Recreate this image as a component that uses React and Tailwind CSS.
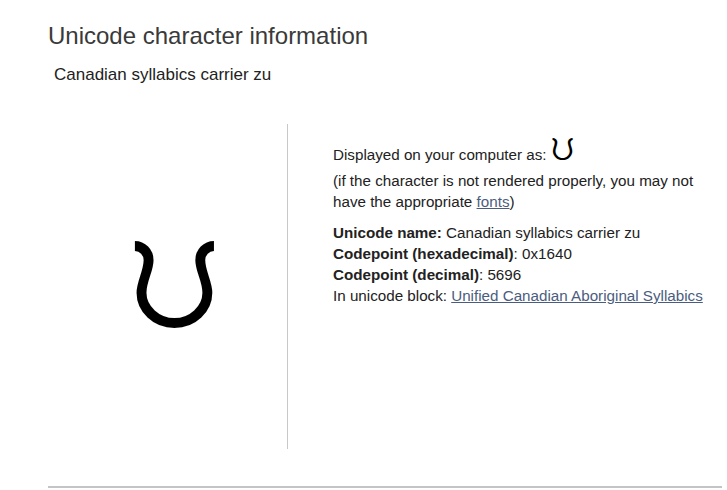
export default function App() {
  return (
    <div className="min-h-[490px] bg-white font-['Liberation_Sans',Arial,sans-serif] text-[#333]">
      <div className="px-[48px] pt-[22px]">
        <h1 className="text-[24px] leading-[28px] text-[#3a3a3a]">Unicode character information</h1>
        <h2 className="mt-[15px] ml-[6px] text-[17px] leading-[20px] text-[#222]">Canadian syllabics carrier zu</h2>

        {/* character + details */}
        <div className="mt-[39px] flex">
          <div className="flex h-[325px] w-[240px] shrink-0 items-center justify-center border-r border-[#c8c8c8]">
            <span className="mt-[-2px] ml-[14px] font-['DejaVu_Sans',sans-serif] text-[118px] leading-none text-black">ᙀ</span>
          </div>
          <div className="whitespace-nowrap pl-[45px] pt-[11px] text-[15.2px] leading-[21px] text-[#222]">
            <p>
              Displayed on your computer as:{" "}
              <span className="font-['DejaVu_Sans',sans-serif] text-[30px] leading-none text-black">ᙀ</span>
            </p>
            <p className="mt-[5px]">
              (if the character is not rendered properly, you may not
              <br />
              have the appropriate <a href="#" className="text-[#4b5d7e] underline">fonts</a>)
            </p>
            <div className="mt-[10px]">
              <p><b>Unicode name:</b> Canadian syllabics carrier zu</p>
              <p><b>Codepoint (hexadecimal)</b>: 0x1640</p>
              <p><b>Codepoint (decimal)</b>: 5696</p>
              <p>In unicode block: <a href="#" className="text-[#4b5d7e] underline">Unified Canadian Aboriginal Syllabics</a></p>
            </div>
          </div>
        </div>

        <hr className="mt-[37px] mr-[-43px] border-t-2 border-[#c4c4c4]" />
      </div>
    </div>
  );
}
